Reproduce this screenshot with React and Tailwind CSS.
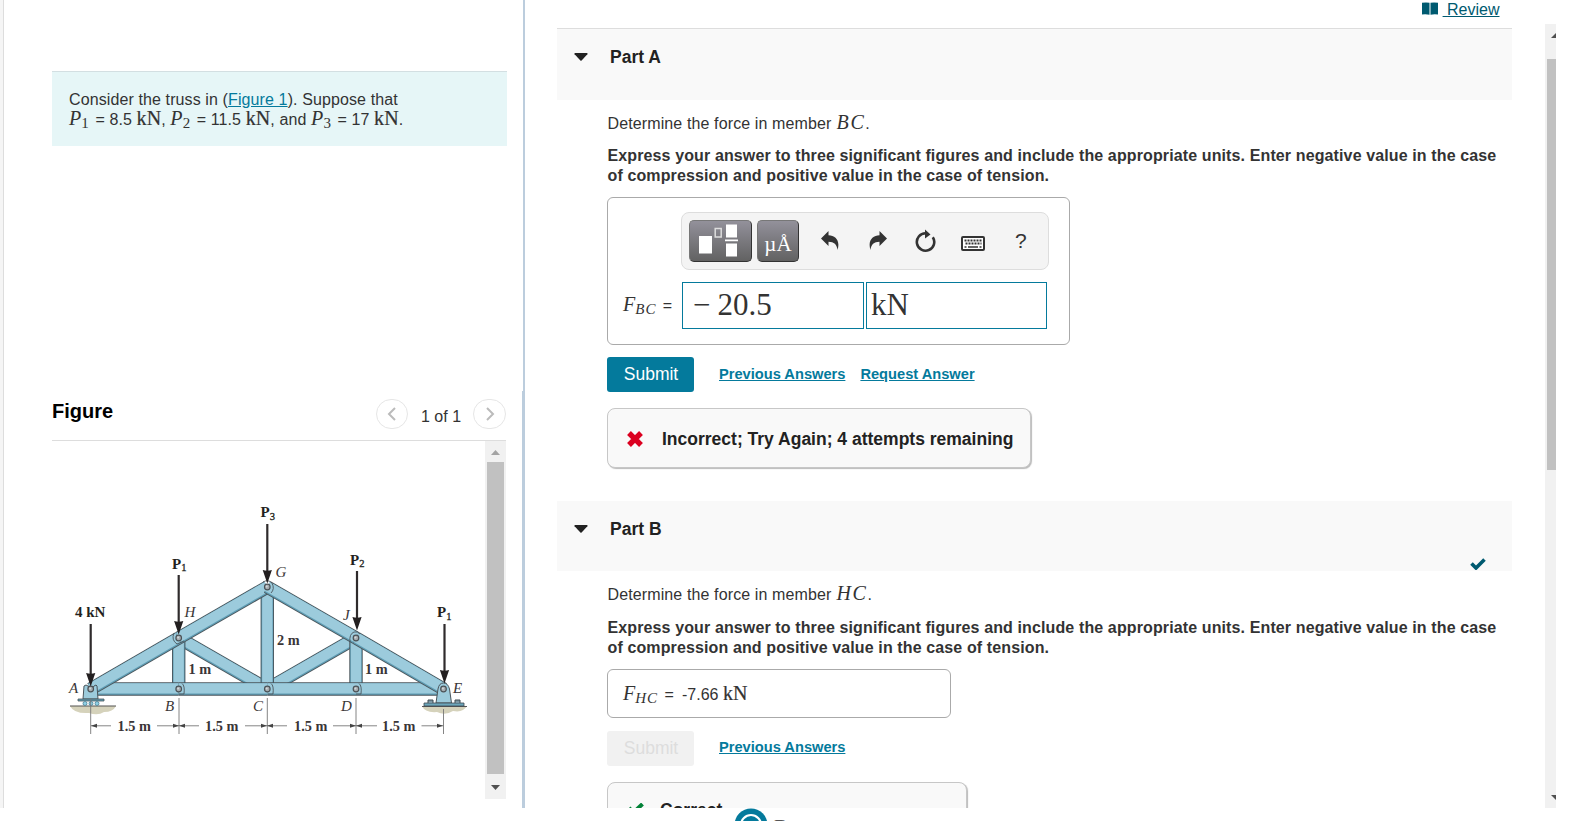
import clsx from 'clsx';

const members = [
  // [x1, y1, x2, y2] in figure coordinates
  [118.7, 148, 207.3, 199],
  [296, 148, 207.3, 199],
  [118.7, 148, 118.7, 199],
  [207.3, 97, 207.3, 199],
  [296, 148, 296, 199],
  [30.7, 199, 118.7, 199],
  [118.7, 199, 207.3, 199],
  [207.3, 199, 296, 199],
  [296, 199, 383.5, 199],
  [30.7, 199, 118.7, 148],
  [118.7, 148, 207.3, 97],
  [207.3, 97, 296, 148],
  [296, 148, 383.5, 199],
];

const pins = [
  [30.7, 199],
  [118.7, 148],
  [207.3, 97],
  [296, 148],
  [383.5, 199],
  [118.7, 199],
  [207.3, 199],
  [296, 199],
];

const loads = [
  { x: 30.7, from: 134, to: 196, label: '4 kN', lx: 15, ly: 127 },
  { x: 118.7, from: 85, to: 144, label: 'P', sub: '1', lx: 112, ly: 78.5 },
  { x: 207.3, from: 34, to: 93, label: 'P', sub: '3', lx: 200.5, ly: 27 },
  { x: 297, from: 81, to: 140, label: 'P', sub: '2', lx: 290, ly: 74.5 },
  { x: 384.5, from: 134, to: 193, label: 'P', sub: '1', lx: 377, ly: 127 },
];

const joints = [
  { name: 'A', x: 9, y: 203 },
  { name: 'H', x: 124.5, y: 127 },
  { name: 'G', x: 215.5, y: 87 },
  { name: 'J', x: 283, y: 130 },
  { name: 'E', x: 393, y: 203 },
  { name: 'B', x: 105, y: 221 },
  { name: 'C', x: 193, y: 221 },
  { name: 'D', x: 281, y: 221 },
];

function Truss() {
  return (
    <svg width="420" height="260" viewBox="0 0 420 260" fontFamily="'Liberation Serif', serif">
      {/* ground */}
      <path d="M10 216h46q-3 6-12 6-6 4-15 1-15 1-19-7z" fill="#d5d2bb" />
      <path d="M362 216h45q-4 7-14 5-8 5-16 1-12 1-15-6z" fill="#d5d2bb" />
      <path d="M10 216h46M362 216.500h45" stroke="#555" strokeWidth="1.200" />

      {members.map(([x1, y1, x2, y2], i) => (
        <g key={i}>
          <line x1={x1} y1={y1} x2={x2} y2={y2} stroke="#4a555b" strokeWidth="13.400" />
          <line x1={x1} y1={y1} x2={x2} y2={y2} stroke="#5f9db4" strokeWidth="11.600" />
          <line x1={x1} y1={y1 - 0.6} x2={x2} y2={y2 - 0.6} stroke="#9ccbdc" strokeWidth="10.300" />
        </g>
      ))}

      {/* supports */}
      <path d="M24 196l2-1 2 1q3 5 6 0l2-1 1 1 1 13H23z" fill="#9ccbdc" stroke="#4a555b" />
      <path d="M18 209h26v2H18z" fill="#5f9db4" stroke="#4a555b" strokeWidth=".8" />
      <g fill="#8fd0e6" stroke="#4a7f92" strokeWidth=".8">
        <circle cx="25" cy="213.500" r="2" />
        <circle cx="31" cy="213.500" r="2" />
        <circle cx="37" cy="213.500" r="2" />
      </g>
      <path d="M376 213l2-14q1-6 5.500-6t6 6l2 14z" fill="#9ccbdc" stroke="#4a555b" />
      <path d="M364 213h40v3h-40z" fill="#6ba6bb" stroke="#3f4a50" strokeWidth=".8" />
      <path d="M368 213v-3h5v3M395 213v-3h5v3" fill="#7d98a5" stroke="#3f4a50" />

      {/* gusset edges */}
      <g fill="none" stroke="#4a555b" strokeWidth=".9">
        <path d="M114 143q-3 7 3 11l7-3M203 92q5-3 9 1 3 6-1 10M290 152q-1-8 4-10 4-1 6 2" />
        <path d="M122 193.500q3 2 2 10.500h-5M211 193.500q3 2 2 10.500h-5M299 193.500q3 2 2 10.500h-5" />
      </g>

      {pins.map(([cx, cy]) => (
        <g key={`${cx}-${cy}`}>
          <circle cx={cx} cy={cy} r="2.800" fill="#a5acb0" stroke="#4c5256" strokeWidth="1.200" />
          <circle cx={cx - 0.6} cy={cy - 0.6} r="1" fill="#d2d6d8" />
        </g>
      ))}

      {loads.map(({ x, from, to, label, sub, lx, ly }) => (
        <g key={`${label}${x}`} fill="#231f20">
          <path d={`M${x} ${from}V${to - 8}`} stroke="#2f2b2c" strokeWidth="2.200" />
          <path d={`M${x - 4.6} ${to - 13}q4.600 1.500 9.200 0L${x} ${to + 0.5}z`} />
          <text x={lx} y={ly} fontSize="15" fontWeight="bold">
            {label}
            {sub && (
              <tspan fontSize="10.500" fontWeight="normal" stroke="#231f20" strokeWidth=".3" dy="2.500">
                {sub}
              </tspan>
            )}
          </text>
        </g>
      ))}

      {joints.map(({ name, x, y }) => (
        <text key={name} x={x} y={y} fontSize="15" fontStyle="italic" fill="#3a3637">
          {name}
        </text>
      ))}

      {/* dimensions */}
      <g fontSize="14.300" fontWeight="bold" fill="#3a3637">
        <text x="217" y="155">2 m</text>
        <text x="128.500" y="184">1 m</text>
        <text x="305" y="184">1 m</text>
        <text x="57.500" y="241">1.5 m</text>
        <text x="145" y="241">1.5 m</text>
        <text x="234" y="241">1.5 m</text>
        <text x="322" y="241">1.5 m</text>
      </g>
      <g stroke="#777" strokeWidth=".9">
        <path d="M30.700 209v35M119 208v36M207.300 208v36M296 208v36M383.500 219v25" />
        <path d="M31 235.800h20M97 235.800h42M185 235.800h42M273 235.800h44M361.500 235.800h22" />
      </g>
      <path
        d="M31 235.800l6-2v4zM119 235.800l-6-2v4zM119 235.800l6-2v4zM207 235.800l-6-2v4zM207 235.800l6-2v4zM296 235.800l-6-2v4zM296 235.800l6-2v4zM383 235.800l-6-2v4z"
        fill="#444"
      />
    </svg>
  );
}

function MathVar({ children, className }) {
  return (
    <span className={clsx("font-['Liberation_Serif',serif] text-[20px] leading-none italic", className)}>
      {children}
    </span>
  );
}

function Index({ children }) {
  return <sub className="bottom-[-3px] mr-[2px] text-[15px] tracking-normal not-italic">{children}</sub>;
}

function MemberIndex({ children }) {
  return <sub className="bottom-[-3px] mr-[2px] text-[15px] tracking-[1px]">{children}</sub>;
}

function Unit({ children }) {
  return (
    <span className="font-['Liberation_Serif',serif] text-[20px] leading-none [-webkit-text-stroke:0.2px]">
      {children}
    </span>
  );
}

function PartHeader({ title, className, children }) {
  return (
    <div className={clsx('relative flex bg-[#f9f9f9] pl-[17px]', className)}>
      <svg width="14" height="8" viewBox="0 0 14 8" className="mt-[24px]">
        <path d="M1 0h12q1 .5.400 1.200L7.600 7.400q-.6.600-1.200 0L.6 1.200Q0 .5 1 0z" fill="#222" />
      </svg>
      <h2 className="mt-[18px] ml-[22px] text-[17.500px] leading-[20px] font-bold text-[#222]">{title}</h2>
      {children}
    </div>
  );
}

function Determine({ member }) {
  return (
    <p className="mt-[12px] h-[21px] pl-[0.5px] text-[16px] leading-[20px] tracking-[0.12px]">
      Determine the force in member <MathVar className="ml-[0.5px] tracking-[1.6px]">{member}</MathVar>.
    </p>
  );
}

function Instructions({ className }) {
  return (
    <p
      className={clsx(
        'pl-[0.5px] text-[16px] leading-[20px] font-bold tracking-[0.12px] whitespace-nowrap',
        className
      )}
    >
      Express your answer to three significant figures and include the appropriate units. Enter negative value in the case
      <br />
      of compression and positive value in the case of tension.
    </p>
  );
}

function Toolbar() {
  return (
    <div className="flex h-[58px] w-[368px] items-start rounded-lg border border-[#ddd] bg-[#f4f4f4] pt-[7px] pl-[7px]">
      <div className="h-[42px] w-[63px] rounded-[5px] border border-[#333] border-t-[#777] border-l-[#777] bg-linear-to-b from-[#93919b] to-[#626262]">
        <svg width="61" height="40" viewBox="0 0 61 40" fill="#fff">
          <path d="M9 15h13v17.500H9zM36 3.500h11v13H36zM36 22.500h11v13H36zM35 18.600h13v1.600H35z" />
          <path d="M25.200 7.500h6v8.500h-6z" fill="none" stroke="#ddd" strokeWidth="1.500" />
        </svg>
      </div>
      <div className="ml-[5px] flex h-[42px] w-[42px] justify-center rounded-[5px] border border-[#333] border-t-[#777] border-l-[#777] bg-linear-to-b from-[#93919b] to-[#626262] pt-[7px] font-['Liberation_Serif',serif] text-[21px] leading-[32px] text-white">
        µÅ
      </div>
      <svg width="18" height="20" viewBox="0 0 18 20" className="mt-[11px] ml-[22px]" fill="#333">
        <path d="M0 7.500L7.500 0v4.200C14.500 4.500 19.500 9.500 16.500 19 16 13.500 13 10.700 7.500 10.700V15z" />
      </svg>
      <svg width="18" height="20" viewBox="0 0 18 20" className="mt-[11px] ml-[30px]" fill="#333">
        <path d="M18 7.500L10.500 0v4.200C3.500 4.500-1.500 9.500 1.500 19 2 13.500 5 10.700 10.500 10.700V15z" />
      </svg>
      <svg width="22" height="24" viewBox="0 0 22 24" className="mt-[9px] ml-[28px]">
        <path d="M10.500 4.300A8.700 8.700 0 1 0 17.800 8.200" fill="none" stroke="#333" strokeWidth="2.600" />
        <path d="M10 .5l5.500 5-5.500 4z" fill="#333" />
      </svg>
      <svg width="24" height="16" viewBox="0 0 24 16" className="mt-[16px] ml-[24px]">
        <rect x="1" y="1" width="22" height="13" rx="1" fill="#fff" stroke="#333" strokeWidth="2" />
        <path d="M3.500 4.500h17M4.500 7.500h16" stroke="#333" strokeWidth="1.800" strokeDasharray="2 1" />
        <path d="M3.500 11h2M7 11h10M18.500 11h2" stroke="#333" strokeWidth="1.600" />
      </svg>
      <span className="mt-[9px] ml-[30px] w-[11px] text-[21px] leading-[24px] text-[#333]">?</span>
    </div>
  );
}

function TextLink({ children, className }) {
  return (
    <a href="#" className={clsx('text-[14.650px] leading-[18px] font-bold text-[#047a9c] underline', className)}>
      {children}
    </a>
  );
}

function LeftPanel() {
  return (
    <section className="flex h-[808px] w-[519px] flex-col pl-[48px]">
      <div className="mt-[71px] h-[75px] w-[455px] border-t border-[#d3dfe2] bg-[#e6f6f7] pt-[18px] pl-[17px] text-[16px] leading-[20px] tracking-[0.11px]">
        <p className="h-[18px]">
          Consider the truss in (
          <a href="#" className="text-[#047a9c] underline">
            Figure 1
          </a>
          ). Suppose that
        </p>
        <p className="h-[20px] whitespace-nowrap">
          <MathVar>
            P<Index>1</Index>
          </MathVar>{' '}
          = 8.5 <Unit>kN</Unit>,{' '}
          <MathVar>
            P<Index>2</Index>
          </MathVar>{' '}
          = 11.5 <Unit>kN</Unit>, and{' '}
          <MathVar>
            P<Index>3</Index>
          </MathVar>{' '}
          = 17 <Unit>kN</Unit>.
        </p>
      </div>

      <div className="mt-[244px] flex h-[51px] w-[454px] items-start border-b border-[#ddd]">
        <h2 className="mt-[9px] flex-1 text-[20px] leading-[24px] font-bold text-black">Figure</h2>
        <div className="mt-[9px] flex h-[30px] w-[32px] items-center justify-center rounded-full border border-[#e6e6e6]">
          <svg width="10" height="14" viewBox="0 0 10 14" fill="none" stroke="#bbb" strokeWidth="2">
            <path d="M8 1L2 7l6 6" />
          </svg>
        </div>
        <span className="mt-[17px] ml-[13px] w-[52px] text-[16px] leading-[20px] whitespace-nowrap">1 of 1</span>
        <div className="mt-[9px] flex h-[30px] w-[33px] items-center justify-center rounded-full border border-[#e6e6e6]">
          <svg width="10" height="14" viewBox="0 0 10 14" fill="none" stroke="#bbb" strokeWidth="2">
            <path d="M2 1l6 6-6 6" />
          </svg>
        </div>
      </div>

      <div className="flex h-[358px] w-[454px]">
        <div className="w-[433px] pt-[49px] pl-[8px]">
          <Truss />
        </div>
        <div className="flex w-[21px] flex-col items-center bg-[#f1f1f1]">
          <svg width="9" height="5" viewBox="0 0 9 5" className="mt-[9px]">
            <path d="M4.500 0L9 5H0z" fill="#a3a3a3" />
          </svg>
          <div className="mt-[7px] h-[312px] w-[17px] bg-[#c1c1c1]" />
          <svg width="9" height="5" viewBox="0 0 9 5" className="mt-[11px]">
            <path d="M4.500 5L9 0H0z" fill="#505050" />
          </svg>
        </div>
      </div>
    </section>
  );
}

function RightPanel() {
  return (
    <section className="h-[808px] w-[955px] overflow-hidden">
      <div className="flex h-[28px] items-start justify-end pr-[12.500px]">
        <svg width="16" height="13" viewBox="0 0 16 13" className="mt-[2px] mr-[5px]" fill="#005a70">
          <path d="M0 .8q4-.8 7.500 0v12q-3.500-1-7.500-.3zM16 .8q-4-.8-7.500 0v12q3.500-1 7.500-.3z" />
        </svg>
        <a href="#" className="text-[16px] leading-[19px] whitespace-pre text-[#005a70] underline">
          {' '}Review
        </a>
      </div>

      <PartHeader title="Part A" className="h-[72px] border-t border-[#ddd]" />
      <div className="pl-[50px]">
        <Determine member="BC" />
        <Instructions className="mt-[13px]" />

        <div className="mt-[11px] h-[148px] w-[463px] rounded-md border border-[#aaa] pt-[14px]">
          <div className="pl-[73px]">
            <Toolbar />
          </div>
          <div className="mt-[12px] flex">
            <div className="w-[74px] pt-[12px] pl-[15px] text-[16px] leading-[20px] whitespace-nowrap">
              <MathVar>
                F<MemberIndex>BC</MemberIndex>
              </MathVar>{' '}
              =
            </div>
            <div className="flex h-[47px] w-[182px] border border-[#047a9c] pl-[10px] font-['Liberation_Serif',serif] text-[31px] leading-[44px]">
              <span className="w-[24.500px]">−</span>
              <span>20.5</span>
            </div>
            <div className="ml-[2px] h-[47px] w-[181px] border border-[#047a9c] pl-[4px] font-['Liberation_Serif',serif] text-[31px] leading-[44px]">
              kN
            </div>
          </div>
        </div>

        <div className="mt-[12px] flex h-[35px]">
          <button className="h-[35px] w-[87px] rounded-[3px] bg-[#047a9c] pl-px text-[17.500px] leading-[33px] text-white">
            Submit
          </button>
          <TextLink className="mt-[8px] ml-[25px]">Previous Answers</TextLink>
          <TextLink className="mt-[8px] ml-[15px]">Request Answer</TextLink>
        </div>

        <div className="mt-[16px] flex h-[60px] w-[424px] items-center rounded-lg border border-[#c7c7c7] bg-[#f9f9f9] pl-[18px] shadow-[1px_1px_1px_#bbb]">
          <svg width="18" height="18" viewBox="0 0 18 18" className="mt-px">
            <path d="M3 3l12 12M15 3L3 15" stroke="#db0020" strokeWidth="5.400" />
          </svg>
          <span className="mt-[2px] ml-[18px] text-[17.500px] font-bold whitespace-nowrap text-[#222]">
            Incorrect; Try Again; 4 attempts remaining
          </span>
        </div>
      </div>

      <PartHeader title="Part B" className="mt-[33px] h-[70px]">
        <svg width="16" height="12" viewBox="0 0 16 12" className="absolute top-[57px] right-[26px]">
          <path d="M1.500 5.500L6 10l8.500-8.500" fill="none" stroke="#005a70" strokeWidth="3.600" />
        </svg>
      </PartHeader>
      <div className="pl-[50px]">
        <Determine member="HC" />
        <Instructions className="mt-[14px]" />

        <div className="mt-[11px] flex h-[49px] w-[344px] rounded-md border border-[#aaa] pt-[13px] pl-[15px] text-[16px] leading-[20px]">
          <div className="w-[59px] whitespace-nowrap">
            <MathVar>
              F<MemberIndex>HC</MemberIndex>
            </MathVar>{' '}
            =
          </div>
          <div>
            -7.66 <Unit>kN</Unit>
          </div>
        </div>

        <div className="mt-[13px] flex h-[35px]">
          <button className="h-[35px] w-[87px] rounded-[3px] bg-[#f1f1f1] pl-px text-[17.500px] leading-[33px] text-[#ddd]">
            Submit
          </button>
          <TextLink className="mt-[7px] ml-[25px]">Previous Answers</TextLink>
        </div>

        <div className="mt-[16px] flex h-[60px] w-[360px] items-start rounded-lg border border-[#c7c7c7] bg-[#f9f9f9] pt-[17px] pl-[19px] shadow-[1px_1px_1px_#bbb]">
          <svg width="18" height="18" viewBox="0 0 18 18" className="mt-[3px]">
            <path d="M2 5L6.500 9.500l9-8.500" fill="none" stroke="#038238" strokeWidth="4" />
          </svg>
          <span className="ml-[15px] text-[17.500px] leading-[20px] font-bold text-[#222]">Correct</span>
        </div>
      </div>
    </section>
  );
}

export default function App() {
  return (
    <div className="h-[821px] w-[1571px] overflow-hidden bg-white font-['Liberation_Sans',Arial,sans-serif] text-[#333]">
      <div className="flex h-[808px]">
        <div className="w-[4px] border-r border-[#ddd] bg-[#f5f5f5]" />
        <LeftPanel />
        <div className="flex w-[2px] flex-col items-end">
          <div className="h-[391px] w-[2px] bg-[#bccddd]" />
          <div className="-ml-px w-[3px] flex-1 bg-[#bccddd]" />
        </div>
        <div className="ml-[32px]">
          <RightPanel />
        </div>
        <div className="mt-[24px] ml-[33px] flex h-[784px] w-[11px] flex-col overflow-hidden bg-[#f1f1f1]">
          <svg width="5" height="5" viewBox="0 0 5 5" className="mt-[9px] ml-[6px]">
            <path d="M5 0v5H0z" fill="#505050" />
          </svg>
          <div className="mt-[21px] ml-[2px] h-[411px] bg-[#c1c1c1]" />
          <svg width="5" height="5" viewBox="0 0 5 5" className="mt-auto mb-[8px] ml-[6px]">
            <path d="M0 0h5v5z" fill="#505050" />
          </svg>
        </div>
      </div>
      <footer className="relative h-[13px] overflow-hidden">
        <svg width="34" height="34" viewBox="0 0 34 34" className="absolute top-0 left-[734px]">
          <circle cx="17" cy="17" r="16.500" fill="#047a9c" />
          <circle cx="17" cy="17" r="10" fill="none" stroke="#fff" strokeWidth="2.200" />
        </svg>
        <span className="absolute top-[5px] left-[774px] font-['Liberation_Serif',serif] text-[24px] leading-[28px] text-[#555]">
          P
        </span>
      </footer>
    </div>
  );
}
